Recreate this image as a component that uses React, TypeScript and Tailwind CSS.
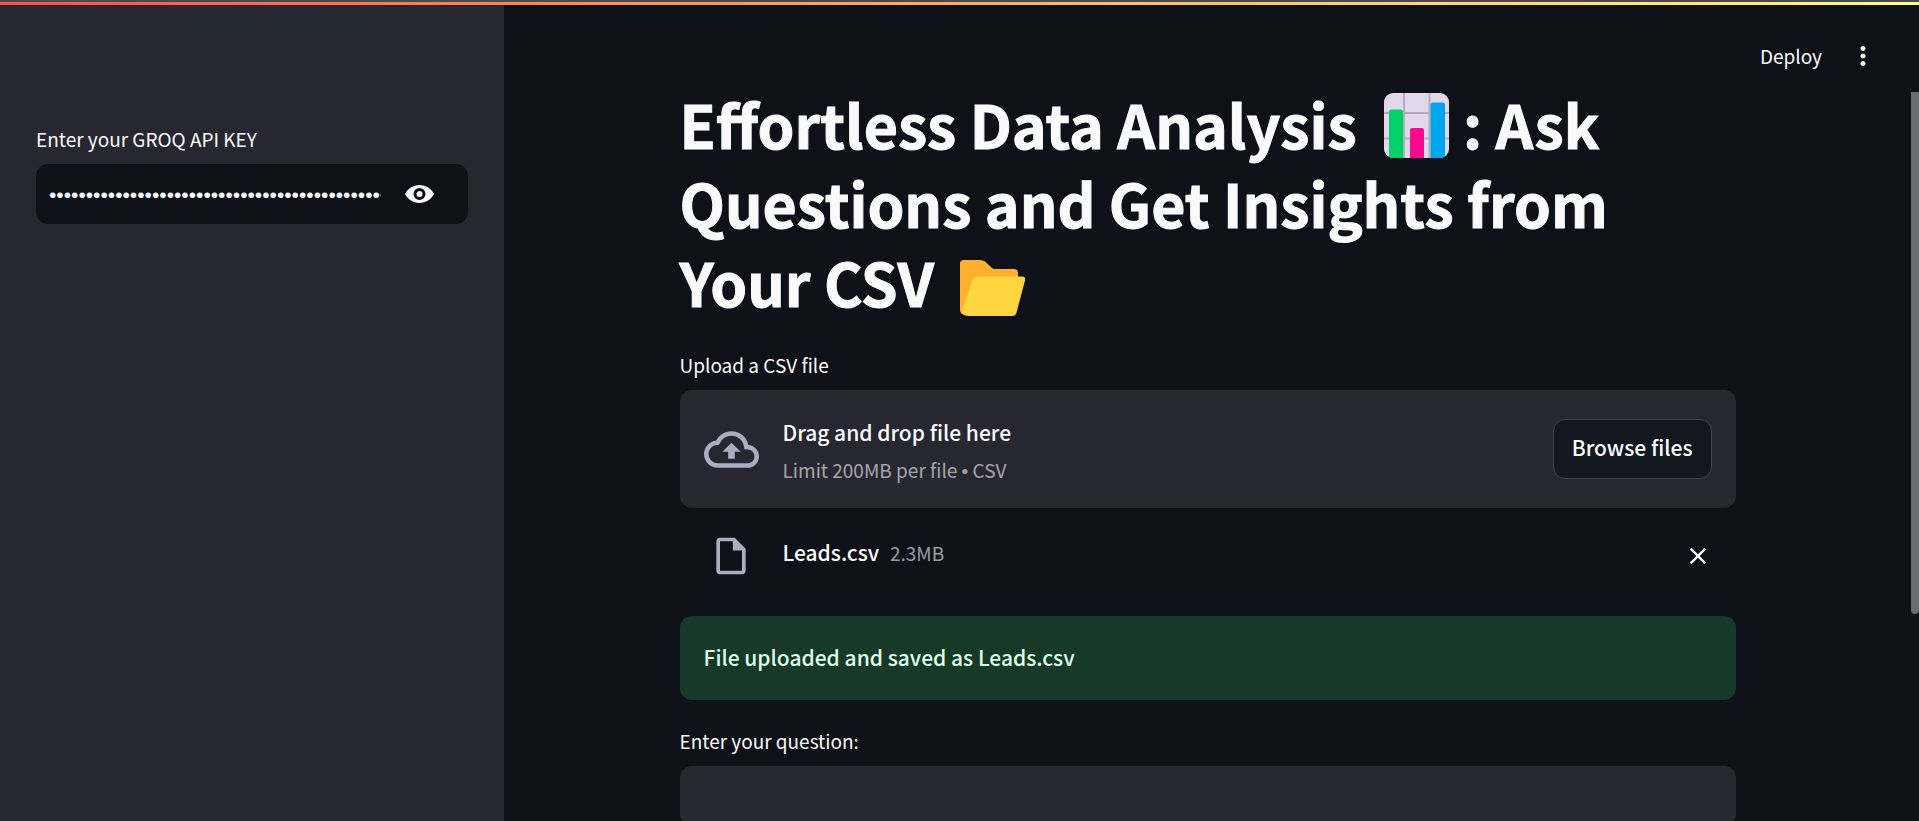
import { useState } from "react";
import { MdOutlineInsertDriveFile, MdOutlineCloudUpload, MdMoreVert, MdClose } from "react-icons/md";

function ChartEmoji() {
  return (
    <svg viewBox="0 0 65 65" className="mx-3.5 inline-block size-[65px] align-[-9px]" role="img" aria-label="bar chart">
      <defs>
        <clipPath id="chart-card">
          <rect width="65" height="65" rx="9" />
        </clipPath>
      </defs>
      <g clipPath="url(#chart-card)">
        <rect width="65" height="65" fill="#e1d8ec" />
        <path d="M20 0V65M45.500 0V65M0 20H65M0 45.500H65" stroke="#b4acbc" strokeWidth="2" />
        <path d="M5 65V19q0-2.500 2.500-2.500h9q2.500 0 2.500 2.500V65z" fill="#00d26a" />
        <path d="M26 65V37.500q0-2.500 2.500-2.500h9q2.500 0 2.500 2.500V65z" fill="#f8098f" />
        <path d="M46.500 65V12q0-2.500 2.500-2.500h9.500q2.500 0 2.500 2.500V65z" fill="#00a6ed" />
      </g>
    </svg>
  );
}

function FolderEmoji() {
  return (
    <svg viewBox="0 -5 65 65" className="mx-3 inline-block size-[65px] align-[-9px]" role="img" aria-label="open folder">
      <path d="M0 50V3.500Q0 0 4 0H20q3 0 5 1.500l6.500 6q1.500 1.500 3.500 1.500H54q4 0 4 4V40L12 55H6Q0 55 0 50z" fill="#ffb02e" transform="translate(0 4)" />
      <path d="M2 55 12.500 24q1.500-3.500 6-3.500H62q4 0 3 4L56.500 56.500q-1 3.500-4 3.500H8.500Q3 60 2 55z" fill="#fcd53f" />
    </svg>
  );
}

function EyeIcon() {
  return (
    <svg viewBox="0 0 29 18" className="h-[18px] w-[29px]" aria-hidden="true">
      <path d="M0 9C3 3.500 8 0 14.500 0S26 3.500 29 9C26 14.500 21 18 14.500 18S3 14.500 0 9z" fill="#fafafa" />
      <circle cx="14.500" cy="9" r="4.500" fill="#fafafa" stroke="#0e1117" strokeWidth="3" />
    </svg>
  );
}

export default function App() {
  const [visible, setVisible] = useState(false);
  const [key, setKey] = useState("gsk_0123456789abcdefghijklmnopqrstuvwxyz0123456789abcdef");
  return (
    <div className="relative flex h-screen overflow-hidden bg-[#0e1117] font-['Noto_Sans_CJK_SC','Noto_Sans',sans-serif] text-[#fafafa]">
      <div className="absolute inset-x-0 top-0 h-[5px] border-t-2 border-[#494949] bg-linear-to-r from-[#ff4b4b] to-[#fffd80]" />
      <aside className="w-[504px] shrink-0 bg-[#262730] px-9 pt-[123px]">
        <label htmlFor="key" className="block text-[19px] leading-8">Enter your GROQ API KEY</label>
        <div className="mt-[9px] flex h-[60px] items-center rounded-xl bg-[#0e1117] pl-[13px]">
          <input
            id="key"
            type={visible ? "text" : "password"}
            value={key}
            onChange={(e) => setKey(e.target.value)}
            className="min-w-0 flex-1 bg-transparent pt-0.5 font-['Liberation_Sans',sans-serif] text-[21px] outline-none"
          />
          <button type="button" aria-label="Show password" onClick={() => setVisible(!visible)} className="mr-[34px] ml-6">
            <EyeIcon />
          </button>
        </div>
      </aside>
      <div className="flex min-w-0 flex-1 flex-col pr-2">
        <header className="flex h-[92px] shrink-0 items-center justify-end gap-[26px] pt-5 pr-[33px]">
          <button type="button" className="text-[19px] leading-8">Deploy</button>
          <button type="button" aria-label="Main menu"><MdMoreVert size={30} /></button>
        </header>
        <main className="mx-auto -mt-2 w-full max-w-[1056px]">
          <h1 className="text-[59px] leading-[79px] font-bold [-webkit-text-stroke:1px]">
            Effortless Data Analysis <ChartEmoji />: Ask Questions and Get Insights from Your CSV <FolderEmoji />
          </h1>
          <p className="mt-7 text-[19px] leading-8">Upload a CSV file</p>
          <section className="mt-[9px] flex h-[118px] items-center rounded-xl bg-[#262730] px-6">
            <MdOutlineCloudUpload size={55} className="text-[#a9aec2]" />
            <div className="ml-6 flex-1 pt-1.5">
              <p className="text-[21px] leading-9 font-medium">Drag and drop file here</p>
              <p className="mt-0.5 text-[19px] leading-9 text-[#fafafa]/60">
                Limit 200MB per file <span className="font-['Liberation_Sans',sans-serif]">•</span> CSV
              </p>
            </div>
            <button type="button" className="h-[60px] rounded-xl border border-[#41444c] bg-[#131720] px-[18px] pb-0.5 text-[21px] font-medium">Browse files</button>
          </section>
          <div className="flex h-24 items-center px-6">
            <span className="flex w-[55px] justify-center"><MdOutlineInsertDriveFile size={44} className="text-[#a9aec2]" /></span>
            <p className="ml-6 flex-1 pb-2 text-[21px] leading-9 font-medium">Leads.csv <span className="ml-1.5 text-[19px] font-normal text-[#fafafa]/60">2.3MB</span></p>
            <button type="button" aria-label="Remove file"><MdClose size={28} /></button>
          </div>
          <div className="mt-3 flex h-21 items-center rounded-xl bg-[#173928] px-6 text-[21px] font-medium text-[#dffde9]" role="status">
            File uploaded and saved as Leads.csv
          </div>
          <label htmlFor="question" className="mt-[25px] block text-[19px] leading-8">Enter your question:</label>
          <input id="question" type="text" className="mt-[9px] h-[60px] w-full rounded-xl bg-[#262730] px-3 text-[21px] outline-none" />
        </main>
      </div>
      <div className="absolute top-[92px] right-0 h-[522px] w-2 rounded-b-sm bg-[#6b6c70]" />
    </div>
  );
}
